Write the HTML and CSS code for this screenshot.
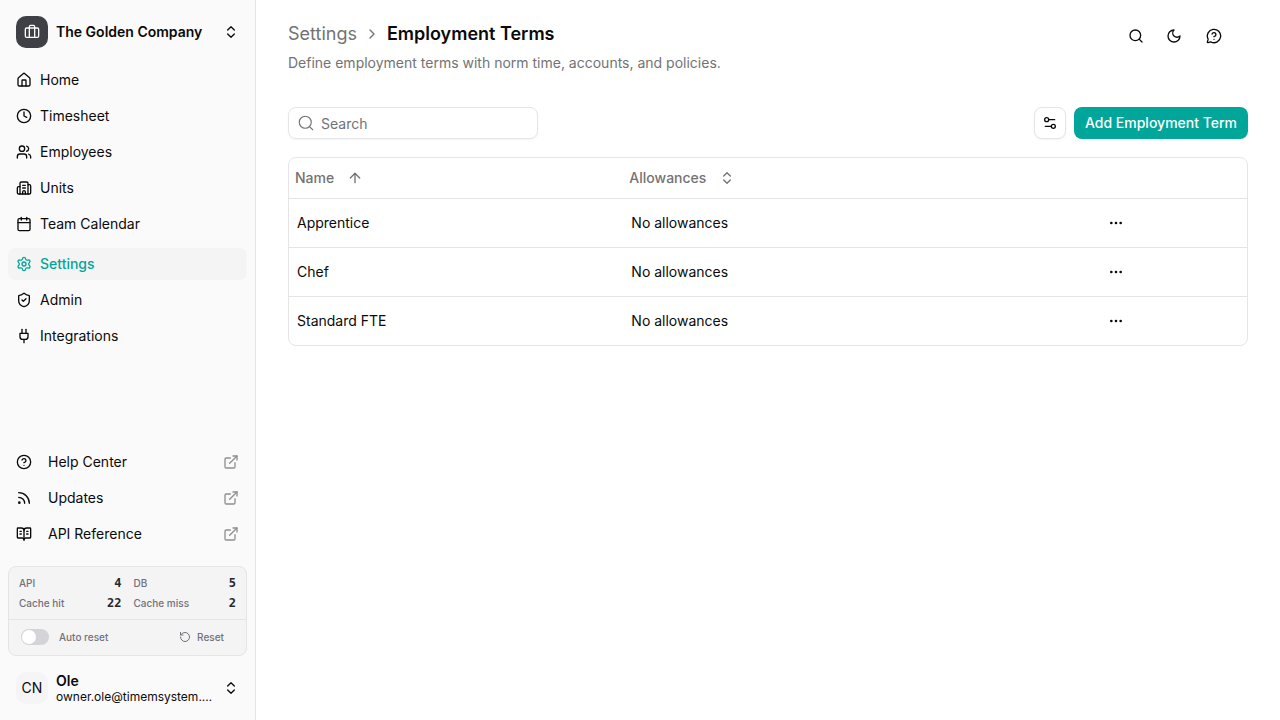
FILE: index.html
```html
<!DOCTYPE html>
<html lang="en">
<head>
<meta charset="utf-8">
<meta name="viewport" content="width=device-width, initial-scale=1">
<title>Employment Terms</title>
<link rel="stylesheet" href="styles.css">
</head>
<body>
<svg class="sprite" aria-hidden="true">
  <symbol id="briefcase" viewBox="0 0 24 24"><path d="M16 20V4a2 2 0 0 0-2-2h-4a2 2 0 0 0-2 2v16"/><rect width="20" height="14" x="2" y="6" rx="2"/></symbol>
  <symbol id="updown" viewBox="0 0 24 24"><path d="m7 15 5 5 5-5"/><path d="m7 9 5-5 5 5"/></symbol>
  <symbol id="house" viewBox="0 0 24 24"><path d="M15 21v-8a1 1 0 0 0-1-1h-4a1 1 0 0 0-1 1v8"/><path d="M3 10a2 2 0 0 1 .709-1.528l7-5.999a2 2 0 0 1 2.582 0l7 5.999A2 2 0 0 1 21 10v9a2 2 0 0 1-2 2H5a2 2 0 0 1-2-2z"/></symbol>
  <symbol id="clock" viewBox="0 0 24 24"><circle cx="12" cy="12" r="10"/><path d="M12 6v6l4 2"/></symbol>
  <symbol id="users" viewBox="0 0 24 24"><path d="M16 21v-2a4 4 0 0 0-4-4H6a4 4 0 0 0-4 4v2"/><circle cx="9" cy="7" r="4"/><path d="M22 21v-2a4 4 0 0 0-3-3.87"/><path d="M16 3.13a4 4 0 0 1 0 7.75"/></symbol>
  <symbol id="building" viewBox="0 0 24 24"><path d="M10 12h4"/><path d="M10 8h4"/><path d="M14 21v-3a2 2 0 0 0-4 0v3"/><path d="M6 10H4a2 2 0 0 0-2 2v7a2 2 0 0 0 2 2h16a2 2 0 0 0 2-2V9a2 2 0 0 0-2-2h-2"/><path d="M6 21V5a2 2 0 0 1 2-2h8a2 2 0 0 1 2 2v16"/></symbol>
  <symbol id="calendar" viewBox="0 0 24 24"><path d="M8 2v4"/><path d="M16 2v4"/><rect width="18" height="18" x="3" y="4" rx="2"/><path d="M3 10h18"/></symbol>
  <symbol id="gear" viewBox="0 0 24 24"><path d="M9.671 4.136a2.34 2.34 0 0 1 4.659 0 2.34 2.34 0 0 0 3.319 1.915 2.34 2.34 0 0 1 2.33 4.033 2.34 2.34 0 0 0 0 3.831 2.34 2.34 0 0 1-2.33 4.033 2.34 2.34 0 0 0-3.319 1.915 2.34 2.34 0 0 1-4.659 0 2.34 2.34 0 0 0-3.32-1.915 2.34 2.34 0 0 1-2.33-4.033 2.34 2.34 0 0 0 0-3.831A2.34 2.34 0 0 1 6.35 6.051a2.34 2.34 0 0 0 3.319-1.915"/><circle cx="12" cy="12" r="3"/></symbol>
  <symbol id="shield" viewBox="0 0 24 24"><path d="M20 13c0 5-3.5 7.5-7.66 8.95a1 1 0 0 1-.67-.01C7.5 20.5 4 18 4 13V6a1 1 0 0 1 1-1c2 0 4.5-1.2 6.24-2.72a1.17 1.17 0 0 1 1.52 0C14.51 3.81 17 5 19 5a1 1 0 0 1 1 1z"/><path d="m9 12 2 2 4-4"/></symbol>
  <symbol id="plug" viewBox="0 0 24 24"><path d="M12 22v-5"/><path d="M9 8V2"/><path d="M15 8V2"/><path d="M18 8v5a4 4 0 0 1-4 4h-4a4 4 0 0 1-4-4V8Z"/></symbol>
  <symbol id="help" viewBox="0 0 24 24"><circle cx="12" cy="12" r="10"/><path d="M9.09 9a3 3 0 0 1 5.83 1c0 2-3 3-3 3"/><path d="M12 17h.01"/></symbol>
  <symbol id="rss" viewBox="0 0 24 24"><path d="M4 11a9 9 0 0 1 9 9"/><path d="M4 4a16 16 0 0 1 16 16"/><circle cx="5" cy="19" r="1"/></symbol>
  <symbol id="book" viewBox="0 0 24 24"><path d="M12 7v14"/><path d="M16 12h2"/><path d="M16 8h2"/><path d="M3 18a1 1 0 0 1-1-1V4a1 1 0 0 1 1-1h5a4 4 0 0 1 4 4 4 4 0 0 1 4-4h5a1 1 0 0 1 1 1v13a1 1 0 0 1-1 1h-6a3 3 0 0 0-3 3 3 3 0 0 0-3-3z"/><path d="M6 12h2"/><path d="M6 8h2"/></symbol>
  <symbol id="external" viewBox="0 0 24 24"><path d="M15 3h6v6"/><path d="M10 14 21 3"/><path d="M18 13v6a2 2 0 0 1-2 2H5a2 2 0 0 1-2-2V8a2 2 0 0 1 2-2h6"/></symbol>
  <symbol id="rotate" viewBox="0 0 24 24"><path d="M3 12a9 9 0 1 0 9-9 9.75 9.75 0 0 0-6.74 2.74L3 8"/><path d="M3 3v5h5"/></symbol>
  <symbol id="chevron" viewBox="0 0 24 24"><path d="m9 18 6-6-6-6"/></symbol>
  <symbol id="search" viewBox="0 0 24 24"><circle cx="11" cy="11" r="8"/><path d="m21 21-4.3-4.3"/></symbol>
  <symbol id="moon" viewBox="0 0 24 24"><path d="M12 3a6 6 0 0 0 9 9 9 9 0 1 1-9-9Z"/></symbol>
  <symbol id="chat" viewBox="0 0 24 24"><path d="M2.992 16.342a2 2 0 0 1 .094 1.167l-1.065 3.29a1 1 0 0 0 1.236 1.168l3.413-.998a2 2 0 0 1 1.099.092 10 10 0 1 0-4.777-4.719"/><path d="M9.09 9a3 3 0 0 1 5.83 1c0 2-3 3-3 3"/><path d="M12 17h.01"/></symbol>
  <symbol id="sliders" viewBox="0 0 24 24"><path d="M14 17H5"/><path d="M19 7h-9"/><circle cx="17" cy="17" r="3"/><circle cx="7" cy="7" r="3"/></symbol>
  <symbol id="arrow-up" viewBox="0 0 24 24"><path d="m5 12 7-7 7 7"/><path d="M12 19V5"/></symbol>
  <symbol id="dots" viewBox="0 0 24 24"><circle cx="12" cy="12" r="1"/><circle cx="19" cy="12" r="1"/><circle cx="5" cy="12" r="1"/></symbol>
</svg>

<div class="app">
  <aside class="sidebar">
    <button class="switcher" type="button">
      <span class="logo"><svg class="icon"><use href="#briefcase"/></svg></span>
      <span class="company">The Golden Company</span>
      <svg class="icon"><use href="#updown"/></svg>
    </button>
    <nav class="nav" aria-label="Main">
      <div class="nav-group">
        <a class="nav-link" href="#"><svg class="icon"><use href="#house"/></svg>Home</a>
        <a class="nav-link" href="#"><svg class="icon"><use href="#clock"/></svg>Timesheet</a>
        <a class="nav-link" href="#"><svg class="icon"><use href="#users"/></svg>Employees</a>
        <a class="nav-link" href="#"><svg class="icon"><use href="#building"/></svg>Units</a>
        <a class="nav-link" href="#"><svg class="icon"><use href="#calendar"/></svg>Team Calendar</a>
      </div>
      <div class="nav-group">
        <a class="nav-link active" href="#" aria-current="page"><svg class="icon"><use href="#gear"/></svg>Settings</a>
        <a class="nav-link" href="#"><svg class="icon"><use href="#shield"/></svg>Admin</a>
        <a class="nav-link" href="#"><svg class="icon"><use href="#plug"/></svg>Integrations</a>
      </div>
    </nav>
    <nav class="nav-group resources" aria-label="Resources">
      <a class="nav-link" href="#"><svg class="icon"><use href="#help"/></svg><span class="label">Help Center</span><svg class="icon muted"><use href="#external"/></svg></a>
      <a class="nav-link" href="#"><svg class="icon"><use href="#rss"/></svg><span class="label">Updates</span><svg class="icon muted"><use href="#external"/></svg></a>
      <a class="nav-link" href="#"><svg class="icon"><use href="#book"/></svg><span class="label">API Reference</span><svg class="icon muted"><use href="#external"/></svg></a>
    </nav>
    <section class="stats" aria-label="Request statistics">
      <dl class="stats-grid">
        <div class="stat"><dt>API</dt><dd>4</dd></div>
        <div class="stat"><dt>DB</dt><dd>5</dd></div>
        <div class="stat"><dt>Cache hit</dt><dd>22</dd></div>
        <div class="stat"><dt>Cache miss</dt><dd>2</dd></div>
      </dl>
      <div class="stats-actions">
        <label class="switch-label" for="auto-reset"><input class="switch" type="checkbox" role="switch" id="auto-reset">Auto reset</label>
        <button class="reset" type="button"><svg class="icon small"><use href="#rotate"/></svg>Reset</button>
      </div>
    </section>
    <button class="switcher" type="button">
      <span class="avatar">CN</span>
      <span class="user"><span class="user-name">Ole</span><span class="user-email">owner.ole@timemsystem.…</span></span>
      <svg class="icon"><use href="#updown"/></svg>
    </button>
  </aside>

  <main class="main">
    <header class="page-header">
      <div>
        <div class="breadcrumb">
          <a class="crumb" href="#">Settings</a>
          <svg class="icon"><use href="#chevron"/></svg>
          <h1 class="title">Employment Terms</h1>
        </div>
        <p class="subtitle">Define employment terms with norm time, accounts, and policies.</p>
      </div>
      <div class="tools">
        <div class="tool-pair">
          <button class="icon-button" type="button" aria-label="Search"><svg class="icon"><use href="#search"/></svg></button>
          <button class="icon-button" type="button" aria-label="Dark mode"><svg class="icon"><use href="#moon"/></svg></button>
        </div>
        <button class="icon-button" type="button" aria-label="Help"><svg class="icon"><use href="#chat"/></svg></button>
      </div>
    </header>

    <div class="toolbar">
      <label class="search">
        <svg class="icon thin"><use href="#search"/></svg>
        <input class="search-input" type="text" placeholder="Search" aria-label="Search">
      </label>
      <div class="toolbar-actions">
        <button class="icon-button outlined" type="button" aria-label="View options"><svg class="icon"><use href="#sliders"/></svg></button>
        <button class="primary" type="button">Add Employment Term</button>
      </div>
    </div>

    <div class="table-card">
      <table class="terms">
        <colgroup><col class="col-name"><col class="col-allowances"><col></colgroup>
        <thead>
          <tr>
            <th scope="col" aria-sort="ascending"><button class="sort" type="button">Name<svg class="icon"><use href="#arrow-up"/></svg></button></th>
            <th scope="col"><button class="sort" type="button">Allowances<svg class="icon"><use href="#updown"/></svg></button></th>
            <th></th>
          </tr>
        </thead>
        <tbody>
          <tr><td>Apprentice</td><td>No allowances</td><td><button class="icon-button" type="button" aria-label="Actions"><svg class="icon"><use href="#dots"/></svg></button></td></tr>
          <tr><td>Chef</td><td>No allowances</td><td><button class="icon-button" type="button" aria-label="Actions"><svg class="icon"><use href="#dots"/></svg></button></td></tr>
          <tr><td>Standard FTE</td><td>No allowances</td><td><button class="icon-button" type="button" aria-label="Actions"><svg class="icon"><use href="#dots"/></svg></button></td></tr>
        </tbody>
      </table>
    </div>
  </main>
</div>
</body>
</html>
```

FILE: styles.css
```css
:root {
  --text: #0a0a0a;
  --muted: #737373;
  --line: #e5e5e5;
  --accent: #00a699;
}

* {
  box-sizing: border-box;
}

body {
  margin: 0;
  color: var(--text);
  background: #fff;
  font-family: Inter, "Liberation Sans", sans-serif;
  font-size: 14px;
  line-height: 20px;
}

button,
input {
  font: inherit;
  color: inherit;
}

button {
  padding: 0;
  border: 0;
  background: none;
  cursor: pointer;
}

a {
  color: inherit;
  text-decoration: none;
}

.sprite {
  display: none;
}

.icon {
  flex: none;
  width: 16px;
  height: 16px;
  fill: none;
  stroke: currentColor;
  stroke-width: 2;
  stroke-linecap: round;
  stroke-linejoin: round;
}

.icon.small {
  width: 12px;
  height: 12px;
}

.icon.thin {
  width: 18px;
  height: 18px;
  stroke-width: 1.5;
}

.icon.muted {
  color: #8f8f8f;
}

.app {
  display: flex;
  min-height: 100vh;
}

/* Sidebar */

.sidebar {
  display: flex;
  flex: none;
  flex-direction: column;
  width: 256px;
  padding: 8px;
  background: #fafafa;
  border-right: 1px solid var(--line);
}

.switcher {
  display: flex;
  align-items: center;
  gap: 8px;
  padding: 8px;
  text-align: left;
}

.logo,
.avatar {
  display: flex;
  flex: none;
  align-items: center;
  justify-content: center;
  width: 32px;
  height: 32px;
  border-radius: 10px;
}

.logo {
  color: #fafafa;
  background: #3f3f46;
}

.avatar {
  background: #f5f5f5;
}

.company {
  flex: 1;
  font-weight: 600;
}

.nav {
  display: flex;
  flex: 1;
  flex-direction: column;
  gap: 8px;
  margin-top: 8px;
}

.nav-group {
  display: flex;
  flex-direction: column;
  gap: 4px;
}

.nav-link {
  display: flex;
  align-items: center;
  gap: 8px;
  height: 32px;
  padding: 0 8px;
  border-radius: 8px;
}

.nav-link.active {
  color: var(--accent);
  background: #f4f4f4;
  font-weight: 500;
}

.resources .nav-link {
  gap: 16px;
}

.label {
  flex: 1;
}

.stats {
  margin: 16px 0 8px;
  color: #71717a;
  background: #f4f4f5;
  border: 1px solid var(--line);
  border-radius: 8px;
  font-size: 10px;
  font-weight: 500;
}

.stats-grid {
  display: grid;
  grid-template-columns: 1fr 1fr;
  column-gap: 12px;
  margin: 0;
  padding: 6px 10px;
}

.stat {
  display: flex;
  align-items: center;
  justify-content: space-between;
}

.stat dd {
  margin: 0;
  color: #27272a;
  font-family: "DejaVu Sans Mono", monospace;
  font-size: 12px;
  font-weight: 700;
}

.stats-actions {
  display: flex;
  align-items: center;
  justify-content: space-between;
  height: 36px;
  padding: 0 22px 1px 12px;
  border-top: 1px solid var(--line);
}

.switch-label {
  display: flex;
  align-items: center;
  gap: 10px;
}

.switch {
  display: flex;
  align-items: center;
  width: 28px;
  height: 16px;
  margin: 0;
  padding: 1px;
  background: #d4d4d8;
  border-radius: 8px;
  appearance: none;
}

.switch::before {
  width: 14px;
  height: 14px;
  background: #fff;
  border-radius: 50%;
  content: "";
}

.switch:checked {
  justify-content: flex-end;
  background: var(--accent);
}

.reset {
  display: flex;
  align-items: center;
  gap: 6px;
}

.user {
  display: flex;
  flex: 1;
  flex-direction: column;
  min-width: 0;
}

.user-name {
  font-weight: 600;
  line-height: 17px;
}

.user-email {
  font-size: 12px;
  line-height: 15px;
  white-space: nowrap;
}

/* Page */

.main {
  flex: 1;
  min-width: 0;
  padding: 20px 32px;
}

.page-header {
  display: flex;
  align-items: flex-start;
  justify-content: space-between;
}

.breadcrumb {
  display: flex;
  align-items: center;
  gap: 7px;
  color: var(--muted);
  font-size: 18px;
  line-height: 28px;
}

.title {
  margin: 0;
  color: var(--text);
  font-size: 18px;
  font-weight: 600;
}

.subtitle {
  margin: 5px 0 0;
  color: var(--muted);
}

.tools {
  display: flex;
  gap: 8px;
  padding-right: 18px;
}

.tool-pair {
  display: flex;
  gap: 6px;
}

.icon-button {
  display: flex;
  align-items: center;
  justify-content: center;
  width: 32px;
  height: 32px;
  border-radius: 8px;
}

.icon-button.outlined {
  background: #fff;
  border: 1px solid var(--line);
  box-shadow: 0 1px 2px rgba(0, 0, 0, 0.05);
}

.toolbar {
  display: flex;
  align-items: center;
  justify-content: space-between;
  margin: 34px 0 18px;
}

.search {
  display: flex;
  align-items: center;
  gap: 6px;
  width: 250px;
  height: 32px;
  padding: 0 8px;
  color: var(--muted);
  border: 1px solid var(--line);
  border-radius: 8px;
  box-shadow: 0 1px 2px rgba(0, 0, 0, 0.05);
}

.search-input {
  flex: 1;
  min-width: 0;
  height: 30px;
  padding: 1px 0 0;
  color: var(--text);
  background: none;
  border: 0;
  outline: 0;
}

.search-input::placeholder {
  color: var(--muted);
}

.toolbar-actions {
  display: flex;
  gap: 8px;
}

.primary {
  height: 32px;
  padding: 0 11px;
  color: #fff;
  background: var(--accent);
  border-radius: 8px;
  font-weight: 500;
}

.table-card {
  overflow: hidden;
  border: 1px solid var(--line);
  border-radius: 8px;
}

.terms {
  width: 100%;
  border-spacing: 0;
  table-layout: fixed;
}

.col-name {
  width: 34.9%;
}

.col-allowances {
  width: 48.9%;
}

.terms th {
  height: 41px;
  padding: 0 6px;
  border-bottom: 1px solid var(--line);
  color: var(--muted);
  font-weight: 500;
  text-align: left;
}

.terms td {
  height: 49px;
  padding: 8px;
  border-bottom: 1px solid var(--line);
}

.terms tbody tr:last-child td {
  height: 48px;
  border-bottom: 0;
}

.sort {
  display: flex;
  align-items: center;
  gap: 13px;
}
```
